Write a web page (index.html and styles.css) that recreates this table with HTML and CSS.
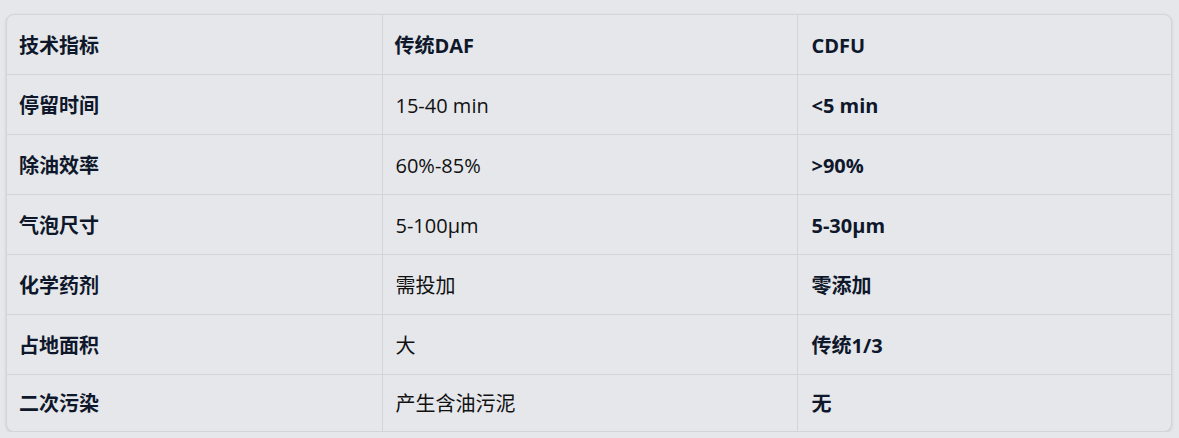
FILE: index.html
```html
<!DOCTYPE html>
<html lang="zh">
<head>
<meta charset="utf-8">
<link rel="stylesheet" href="styles.css">
</head>
<body>
<div class="table-wrap">
  <table class="compare">
    <colgroup>
      <col class="c1">
      <col class="c2">
      <col class="c3">
    </colgroup>
    <thead>
      <tr><th>技术指标</th><th>传统DAF</th><th>CDFU</th></tr>
    </thead>
    <tbody>
      <tr><td class="label">停留时间</td><td>15-40 min</td><td class="strong">&lt;5 min</td></tr>
      <tr><td class="label">除油效率</td><td>60%-85%</td><td class="strong">&gt;90%</td></tr>
      <tr><td class="label">气泡尺寸</td><td>5-100μm</td><td class="strong">5-30μm</td></tr>
      <tr><td class="label">化学药剂</td><td>需投加</td><td class="strong">零添加</td></tr>
      <tr><td class="label">占地面积</td><td>大</td><td class="strong">传统1/3</td></tr>
      <tr><td class="label">二次污染</td><td>产生含油污泥</td><td class="strong">无</td></tr>
    </tbody>
  </table>
</div>
</body>
</html>
```

FILE: styles.css
```css
html, body {
  margin: 0;
  background: #e5e7eb;
}
body {
  padding: 14px 7px 0 6px;
  font-family: "Open Sans", "Noto Sans CJK SC", sans-serif;
  font-size: 20px;
  color: #0f172a;
}
.table-wrap {
  width: 1166px;
  box-sizing: border-box;
  border: 1px solid #d1d5db;
  border-radius: 8px;
  overflow: hidden;
  background: #e5e7eb;
  box-shadow: 0 1px 3px rgba(0, 0, 0, 0.12);
}
.compare {
  width: 100%;
  border-collapse: collapse;
  table-layout: fixed;
}
.c1 { width: 375px; }
.c2 { width: 415px; }
.compare th,
.compare td {
  height: 60px;
  padding: 3px 12px 0;
  box-sizing: border-box;
  text-align: left;
  vertical-align: middle;
  line-height: 24px;
  border-right: 1px solid #d1d5db;
  border-bottom: 1px solid #d1d5db;
}
.compare th {
  height: 59px;
  font-weight: 700;
}
.compare th:last-child,
.compare td:last-child {
  border-right: none;
}
.compare tbody tr:last-child td {
  height: 57px;
  border-bottom: none;
}
.compare td:nth-child(2) {
  padding-left: 13px;
  font-weight: 400;
  color: #111;
}
.compare td:nth-child(3),
.compare th:nth-child(3) {
  padding-left: 14px;
}
.label,
.strong {
  font-weight: 700;
}
```
